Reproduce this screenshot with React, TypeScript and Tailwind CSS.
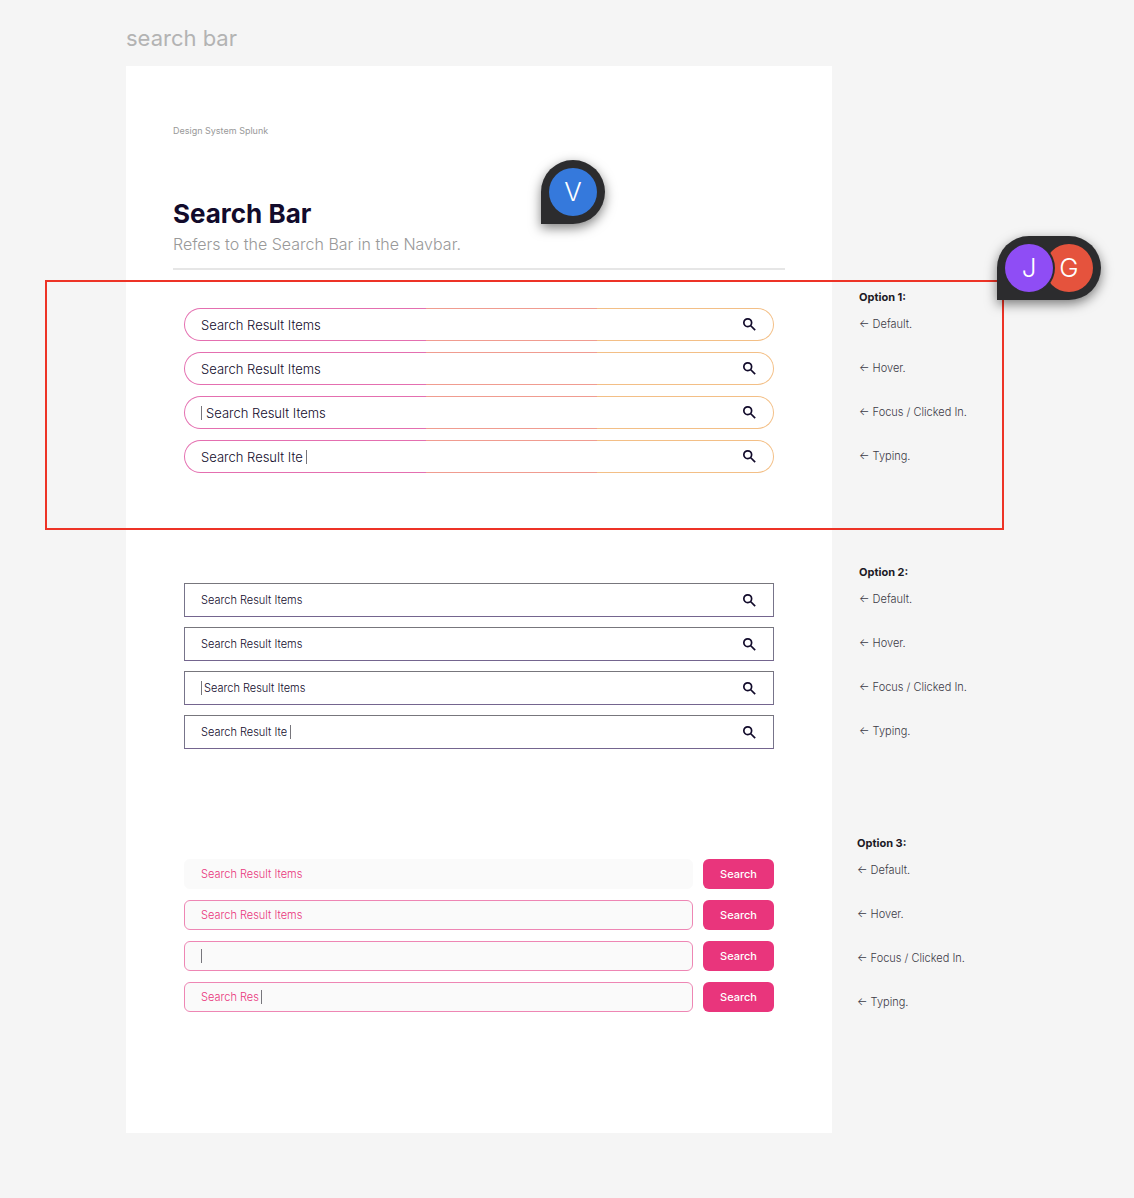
import React, { useState } from 'react';

type CaretPlace = 'none' | 'before' | 'after';

type FieldProps = {
  label: string;
  text: string;
  caret?: CaretPlace;
  caretGap?: string;
  textClass: string;
};

const states = ['Default', 'Hover', 'Focus / Clicked In', 'Typing'];

const Caret = () => <span className="h-[14px] w-px shrink-0 bg-[#77767c]" />;

// Text input with a static caret drawn before or after the value
const Field = ({ label, text, caret = 'none', caretGap = '', textClass }: FieldProps) => {
  const [value, setValue] = useState(text);

  return (
    <div className={`flex min-w-0 flex-1 items-center ${caretGap}`}>
      {caret === 'before' && <Caret />}
      <input
        type="text"
        aria-label={label}
        value={value}
        onChange={(e: React.ChangeEvent<HTMLInputElement>) => setValue(e.target.value)}
        className={`min-w-0 bg-transparent outline-none ${caret === 'after' ? 'field-sizing-content' : 'flex-1'} ${textClass}`}
      />
      {caret === 'after' && <Caret />}
    </div>
  );
};

const IconButton = () => (
  <button type="button" aria-label="Search" className="text-[#120b2b]">
    <svg viewBox="0 0 24 24" className="size-[17px]" fill="none" stroke="currentColor" strokeWidth="2.4">
      <circle cx="9.5" cy="9.5" r="5.5" />
      <path d="M13.4 13.4l6.6 6.6" />
    </svg>
  </button>
);

const searchRows: { text: string; caret: CaretPlace }[] = [
  { text: 'Search Result Items', caret: 'none' },
  { text: 'Search Result Items', caret: 'none' },
  { text: 'Search Result Items', caret: 'before' },
  { text: 'Search Result Ite', caret: 'after' },
];

const pinkRows: { text: string; caret: CaretPlace; border: string }[] = [
  { text: 'Search Result Items', caret: 'none', border: 'border-[#fafafa]' },
  { text: 'Search Result Items', caret: 'none', border: 'border-[#ee86b4]' },
  { text: '', caret: 'before', border: 'border-[#ee86b4]' },
  { text: 'Search Res', caret: 'after', border: 'border-[#ee86b4]' },
];

const Notes = ({ title, className = '' }: { title: string; className?: string }) => (
  <section className={`text-[11px] leading-4 text-[#3c3a46] ${className}`}>
    <h2 className="font-bold text-[#1b1924]">{title}</h2>
    <ul className="mt-[11px] flex flex-col gap-7 font-light">
      {states.map((s) => (
        <li key={s}>← {s}.</li>
      ))}
    </ul>
  </section>
);

const Avatar = ({ letter, className }: { letter: string; className: string }) => (
  <span className={`flex size-12 items-center justify-center rounded-full pb-px text-[26px] font-light text-white ${className}`}>
    {letter}
  </span>
);

const pin = 'absolute flex h-16 items-center rounded-full rounded-bl-none bg-[#2c2c2e] px-2 shadow-[0_4px_12px_rgba(0,0,0,0.5)]';

const App = () => {
  return (
    <div className="relative min-h-screen bg-[#f5f5f5] pb-[65px] pl-[126px] font-['Inter',sans-serif]">
      <p className="pt-5 text-[22px] leading-9 text-[#b3b3b3]">search bar</p>

      <div className="mt-[10px] flex items-stretch">
        <main className="min-w-0 flex-1 bg-white px-[47px] pt-[58px] pb-[121px]">
          <p className="text-[9px] leading-[14px] text-[#999999]">Design System Splunk</p>

          {/* Heading */}
          <header className="mt-[60px] border-b-2 border-[#e6e6e6] pb-[14px]">
            <h1 className="text-[26px] leading-8 font-bold text-[#120b2b]">Search Bar</h1>
            <p className="mt-1 text-base leading-5 font-light text-[#999999]">
              Refers to the Search Bar in the Navbar.
            </p>
          </header>

          {/* Option 1 */}
          <div className="mt-[38px] flex flex-col gap-[11px] px-[11px]">
            {searchRows.map((row, i) => (
              <div
                key={i}
                className="rounded-full bg-[linear-gradient(to_right,#e46fb0_41%,#f09c90_41%,#f09c90_70%,#f3bf86_70%)] p-px"
              >
                <div className="flex h-[31px] items-center rounded-full bg-white pr-[15px] pl-4">
                  <Field
                    label={`Option 1 ${states[i]}`}
                    text={row.text}
                    caret={row.caret}
                    caretGap={row.caret === 'before' ? 'gap-1' : 'gap-[3px]'}
                    textClass="text-[13px] leading-5 font-light text-[#120b2b]"
                  />
                  <IconButton />
                </div>
              </div>
            ))}
          </div>

          {/* Option 2 */}
          <div className="mt-[110px] flex flex-col gap-[10px] px-[11px]">
            {searchRows.map((row, i) => (
              <div
                key={i}
                className="flex h-[34px] items-center border border-t-[#77767c] border-r-[#77748a] border-b-[#74658f] border-l-[#77748a] pr-[15px] pl-4"
              >
                <Field
                  label={`Option 2 ${states[i]}`}
                  text={row.text}
                  caret={row.caret}
                  caretGap={row.caret === 'before' ? 'gap-0.5' : 'gap-[3px]'}
                  textClass="text-[11px] leading-5 font-light text-[#120b2b]"
                />
                <IconButton />
              </div>
            ))}
          </div>

          {/* Option 3 */}
          <div className="mt-[110px] flex flex-col gap-[11px] px-[11px]">
            {pinkRows.map((row, i) => (
              <form key={i} className="flex gap-[10px]" onSubmit={(e) => e.preventDefault()}>
                <div className={`flex h-[30px] min-w-0 flex-1 items-center rounded-md border bg-[#fafafa] px-4 ${row.border}`}>
                  <Field
                    label={`Option 3 ${states[i]}`}
                    text={row.text}
                    caret={row.caret}
                    caretGap="gap-[2px]"
                    textClass="text-[11px] leading-5 font-light text-[#e9357c]"
                  />
                </div>
                <button type="submit" className="w-[71px] rounded-md bg-[#e9357c] text-[11px] font-medium text-white">
                  Search
                </button>
              </form>
            ))}
          </div>
        </main>

        <aside className="w-[302px] shrink-0 pt-[223px] pl-[27px]">
          <Notes title="Option 1:" />
          <Notes title="Option 2:" className="mt-[100px]" />
          <Notes title="Option 3:" className="-ml-[2px] mt-[96px]" />
        </aside>
      </div>

      {/* Selection and comment pins over the canvas */}
      <div className="pointer-events-none absolute top-[280px] right-[130px] left-[45px] h-[250px] border-2 border-[#ed3326]" />

      <div className={`top-[160px] left-[541px] ${pin}`}>
        <Avatar letter="V" className="bg-[#3579dc]" />
      </div>

      <div className={`top-[236px] right-[33px] ${pin}`}>
        <Avatar letter="J" className="z-10 bg-[#8f4df5] ring-2 ring-[#2c2c2e]" />
        <Avatar letter="G" className="-ml-2 bg-[#e5533d]" />
      </div>
    </div>
  );
};

export default App;
